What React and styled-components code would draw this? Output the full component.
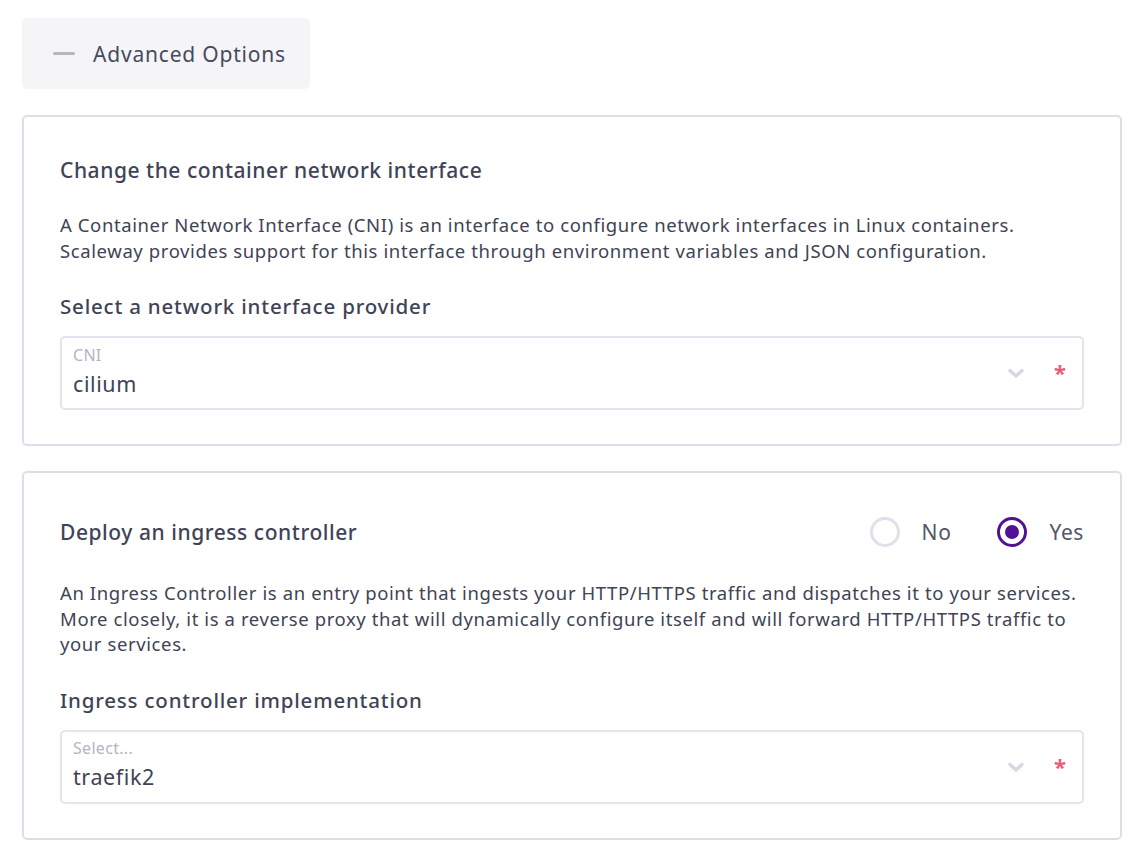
import React from "react";
import styled, { createGlobalStyle } from "styled-components";

const GlobalStyle = createGlobalStyle`
  * { box-sizing: border-box; }
  body {
    margin: 0;
    background: #ffffff;
    font-family: "Noto Sans", "Open Sans", sans-serif;
    color: #3f4356;
  }
`;

const Page = styled.main`
  padding: 18px 24px 0 22px;
  width: 1146px;
  display: flex;
  flex-direction: column;
  align-items: flex-start;
`;

const ToggleButton = styled.button`
  display: flex;
  align-items: center;
  gap: 18px;
  height: 71px;
  padding: 0 24px 0 31px;
  border: none;
  border-radius: 6px;
  background: #f5f5f7;
  font-family: inherit;
  font-size: 21px;
  letter-spacing: 0.8px;
  color: #464b5e;
  margin-bottom: 26px;
`;

const Minus = styled.span`
  width: 22px;
  height: 3px;
  border-radius: 2px;
  background: #b5b7c0;
`;

const Card = styled.section`
  align-self: stretch;
  border: 2px solid #dcdeea;
  border-radius: 5px;
  padding: ${(p) => p.$pad};
  margin-bottom: 25px;
`;

const HeadRow = styled.div`
  display: flex;
  align-items: center;
  justify-content: space-between;
`;

const Title = styled.h2`
  margin: 0;
  font-size: 21px;
  font-weight: 500;
  letter-spacing: 0.55px;
  color: #3f4356;
  line-height: 30px;
`;

const Text = styled.p`
  margin: ${(p) => p.$top}px 0 0;
  font-size: 18.5px;
  letter-spacing: 0.6px;
  line-height: 25.5px;
  color: #3f4356;
`;

const SubTitle = styled.h3`
  margin: 28px 0 15px;
  font-size: 20.5px;
  font-weight: 500;
  letter-spacing: 0.8px;
  line-height: 30px;
  color: #3f4356;
`;

const SelectBox = styled.div`
  display: flex;
  align-items: center;
  height: 74px;
  border: 2px solid #e2e4ee;
  border-radius: 5px;
  padding: 0 16px 0 11px;
`;

const SelectText = styled.div`
  flex: 1;
  display: flex;
  flex-direction: column;
`;

const SelectLabel = styled.span`
  font-size: 16px;
  line-height: 18px;
  letter-spacing: 0.3px;
  color: #b3b5c2;
  margin-top: -3px;
`;

const SelectValue = styled.span`
  font-size: 21.5px;
  letter-spacing: 0.6px;
  line-height: 28px;
  margin-top: 6px;
  color: #3f4356;
`;

const Asterisk = styled.span`
  color: #ec5a78;
  font-size: 22px;
  font-weight: 700;
  margin-left: 28px;
  margin-top: -2px;
`;

const Radios = styled.div`
  display: flex;
  align-items: center;
  gap: 46px;
`;

const RadioItem = styled.label`
  display: flex;
  align-items: center;
  gap: 22px;
  font-size: 21px;
  letter-spacing: 0.6px;
  color: #52566a;
`;

const RadioCircle = styled.span`
  width: 30px;
  height: 30px;
  border-radius: 50%;
  border: 3px solid ${(p) => (p.$checked ? "#521094" : "#dfe1ea")};
  display: flex;
  align-items: center;
  justify-content: center;
  &::after {
    content: "";
    display: ${(p) => (p.$checked ? "block" : "none")};
    width: 14px;
    height: 14px;
    border-radius: 50%;
    background: #521094;
  }
`;

const Chevron = () => (
  <svg width="20" height="20" viewBox="0 0 20 20">
    <path d="M4 7.5l6 5.5 6-5.5" fill="none" stroke="#d6d9e4" strokeWidth="3.4" strokeLinecap="round" strokeLinejoin="round" />
  </svg>
);

const Select = ({ label, value }) => (
  <SelectBox>
    <SelectText>
      <SelectLabel>{label}</SelectLabel>
      <SelectValue>{value}</SelectValue>
    </SelectText>
    <Chevron />
    <Asterisk>*</Asterisk>
  </SelectBox>
);

export default function App() {
  return (
    <>
      <GlobalStyle />
      <Page>
        <ToggleButton>
          <Minus />
          Advanced Options
        </ToggleButton>

        <Card $pad="38px 36px 34px 36px">
          <Title>Change the container network interface</Title>
          <Text $top={27}>
            A Container Network Interface (CNI) is an interface to configure network interfaces in Linux containers.
            <br />
            Scaleway provides support for this interface through environment variables and JSON configuration.
          </Text>
          <SubTitle>Select a network interface provider</SubTitle>
          <Select label="CNI" value="cilium" />
        </Card>

        <Card $pad="44px 36px 34px 36px">
          <HeadRow>
            <Title>Deploy an ingress controller</Title>
            <Radios>
              <RadioItem>
                <RadioCircle />
                No
              </RadioItem>
              <RadioItem>
                <RadioCircle $checked />
                Yes
              </RadioItem>
            </Radios>
          </HeadRow>
          <Text $top={33}>
            An Ingress Controller is an entry point that ingests your HTTP/HTTPS traffic and dispatches it to your services.
            <br />
            More closely, it is a reverse proxy that will dynamically configure itself and will forward HTTP/HTTPS traffic to
            <br />
            your services.
          </Text>
          <SubTitle>Ingress controller implementation</SubTitle>
          <Select label="Select..." value="traefik2" />
        </Card>
      </Page>
    </>
  );
}
